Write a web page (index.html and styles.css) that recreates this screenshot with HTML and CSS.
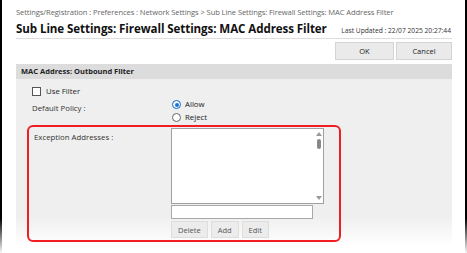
FILE: index.html
```html
<!DOCTYPE html>
<html lang="en">
<head>
    <meta charset="UTF-8">
    <meta name="viewport" content="width=device-width, initial-scale=1.0">
    <title>MAC Address Filter</title>
    <link rel="stylesheet" href="styles.css">
</head>
<body>
    <div class="window">
        <div class="breadcrumb">Settings/Registration : Preferences : Network Settings &gt; Sub Line Settings: Firewall Settings: MAC Address Filter</div>
        <div class="title-row">
            <h1>Sub Line Settings: Firewall Settings: MAC Address Filter</h1>
            <span class="updated">Last Updated : 22/07 2025 20:27:44</span>
        </div>
        <div class="actions">
            <button class="btn">OK</button>
            <button class="btn">Cancel</button>
        </div>
        <div class="section">
            <div class="section-head">MAC Address: Outbound Filter</div>
            <div class="section-body">
                <label class="check"><span class="box"></span>Use Filter</label>
                <div class="row">
                    <div class="label">Default Policy :</div>
                    <div class="radios">
                        <label class="radio"><span class="dot on"></span>Allow</label>
                        <label class="radio"><span class="dot"></span>Reject</label>
                    </div>
                </div>
                <div class="highlight">
                    <div class="label">Exception Addresses :</div>
                    <div class="list-col">
                        <div class="listbox">
                            <div class="scroll">
                                <span class="arrow up"></span>
                                <span class="thumb"></span>
                                <span class="arrow down"></span>
                            </div>
                        </div>
                        <div class="entry"></div>
                        <div class="list-btns">
                            <button class="small">Delete</button>
                            <button class="small">Add</button>
                            <button class="small">Edit</button>
                        </div>
                    </div>
                </div>
            </div>
        </div>
    </div>
</body>
</html>
```

FILE: styles.css
```css
body {
    margin: 0;
    background: #fff;
    font-family: "Open Sans", "Noto Sans", sans-serif;
    color: #222;
}

.window {
    width: 467px;
    height: 253px;
    box-sizing: border-box;
    border-style: solid;
    border-width: 0 2px 0 2px;
    border-image: linear-gradient(to bottom, #000 0%, #000 86%, #fff 100%) 1;
    padding: 0 13px 0 14px;
}

.breadcrumb {
    padding-top: 7px;
    font-size: 7.6px;
    color: #666;
    letter-spacing: -0.1px;
    white-space: nowrap;
}

.title-row {
    display: flex;
    justify-content: space-between;
    align-items: baseline;
    margin-top: 4px;
    padding-bottom: 2px;
    border-bottom: 1px solid #ddd;
}

h1 {
    margin: 0;
    font-size: 11.6px;
    font-weight: 700;
    color: #111;
    letter-spacing: -0.1px;
}

.updated {
    font-size: 6.7px;
    color: #333;
    padding-right: 1px;
}

.actions {
    display: flex;
    justify-content: flex-end;
    gap: 2px;
    margin-top: 3px;
}

.btn {
    font-family: inherit;
    font-size: 7.5px;
    color: #222;
    background: #eaeaea;
    border: 1px solid #d4d4d4;
    height: 18px;
    padding: 0;
}

.btn:first-child {
    width: 59px;
}

.btn:last-child {
    width: 56px;
}

.section {
    margin-top: 4px;
}

.section-head {
    background: #dcdcdc;
    font-size: 7.5px;
    font-weight: 700;
    padding: 2px 5px 3px;
    color: #222;
}

.section-body {
    background: linear-gradient(to bottom, #efefef 0%, #efefef 82%, #fff 100%);
    padding: 7px 0 12px 11px;
    height: 167px;
    box-sizing: border-box;
    font-size: 7.8px;
}

.check {
    display: flex;
    align-items: center;
    gap: 5px;
    padding-left: 5px;
}

.box {
    width: 7px;
    height: 7px;
    border: 1px solid #555;
    background: #fff;
}

.row {
    display: flex;
    margin-top: 2px;
}

.label {
    width: 140px;
    padding-left: 5px;
    padding-top: 5px;
    color: #333;
}

.radios {
    display: flex;
    flex-direction: column;
}

.radio {
    display: flex;
    align-items: center;
    gap: 4px;
    line-height: 13px;
}

.dot {
    width: 7px;
    height: 7px;
    border-radius: 50%;
    border: 1px solid #666;
    background: #fff;
    box-sizing: content-box;
    position: relative;
}

.dot.on {
    border-color: #0a64c8;
}

.dot.on::after {
    content: "";
    position: absolute;
    left: 1.5px;
    top: 1.5px;
    width: 4px;
    height: 4px;
    border-radius: 50%;
    background: #1a73d9;
}

.highlight {
    display: flex;
    margin-top: 1px;
    border: 2px solid #f01e23;
    border-radius: 6px;
    width: 314px;
    box-sizing: border-box;
    padding: 1px 0 2px 0;
}

.highlight .label {
    width: 137px;
    padding-top: 4px;
}

.listbox {
    width: 153px;
    height: 76px;
    box-sizing: border-box;
    background: #fff;
    border: 1px solid #a0a0a0;
    display: flex;
    justify-content: flex-end;
}

.scroll {
    width: 9px;
    display: flex;
    flex-direction: column;
    align-items: center;
    padding: 3px 0;
}

.arrow {
    width: 0;
    height: 0;
    border-left: 3px solid transparent;
    border-right: 3px solid transparent;
}

.arrow.up {
    border-bottom: 4px solid #999;
}

.arrow.down {
    border-top: 4px solid #999;
    margin-top: auto;
}

.thumb {
    margin-top: 3px;
    width: 4px;
    height: 10px;
    border-radius: 2px;
    background: #888;
}

.entry {
    width: 142px;
    height: 14px;
    box-sizing: border-box;
    background: #fff;
    border: 1px solid #a8a8a8;
    margin-top: 1px;
}

.list-btns {
    display: flex;
    gap: 3px;
    margin-top: 2px;
}

.small {
    font-family: inherit;
    font-size: 7.5px;
    color: #555;
    background: #ececec;
    border: 1px solid #dedede;
    height: 17px;
    padding: 0 6px;
}
```
